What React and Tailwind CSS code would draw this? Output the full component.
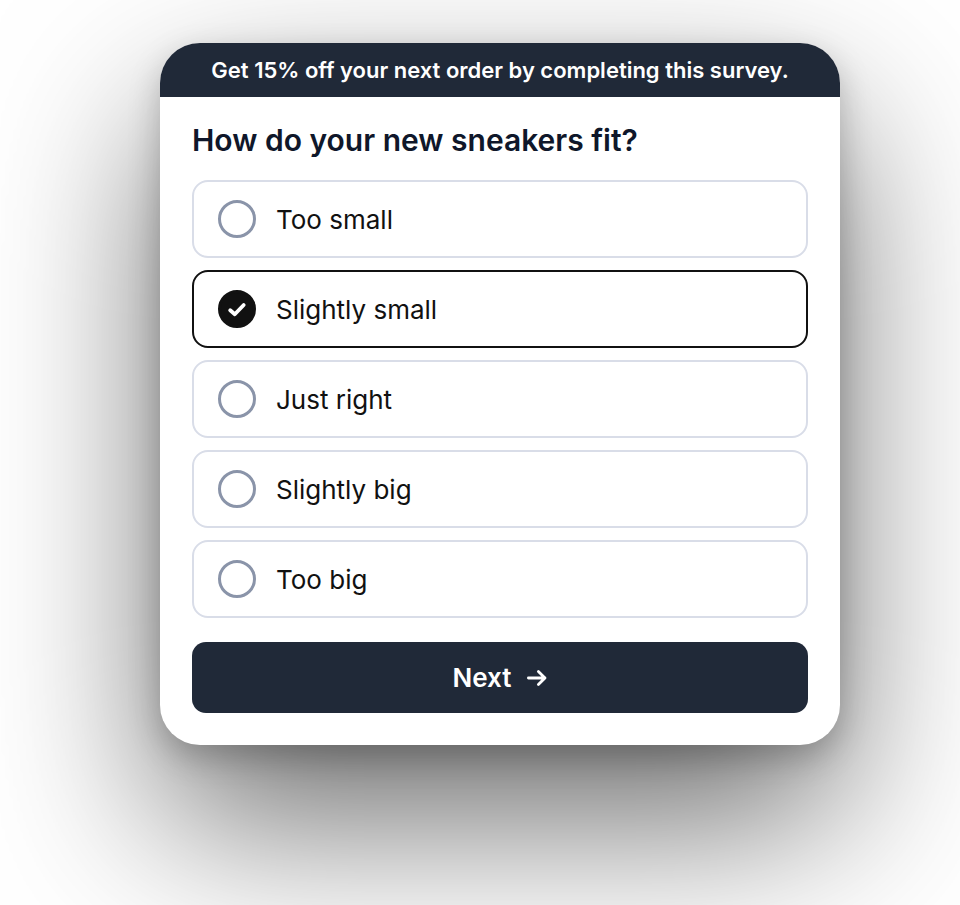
import React, { useState } from "react";

const OPTIONS = ["Too small", "Slightly small", "Just right", "Slightly big", "Too big"];

function Option({ label, checked, onSelect }) {
  return (
    <label
      className={[
        "flex cursor-pointer items-center gap-5 rounded-2xl border-2 px-6 py-[18px]",
        checked ? "border-[#111111]" : "border-[#d9dde8]",
      ].join(" ")}
    >
      <span className="grid shrink-0 place-items-center">
        <input
          type="radio"
          name="fit"
          value={label}
          checked={checked}
          onChange={() => onSelect(label)}
          className="col-start-1 row-start-1 size-[38px] appearance-none rounded-full border-3 border-[#8a94a9] checked:border-[#111111] checked:bg-[#111111]"
        />
        {checked && (
          <svg
            viewBox="0 0 38 38"
            className="pointer-events-none col-start-1 row-start-1 size-[38px]"
            fill="none"
            stroke="white"
            strokeWidth="3.8"
            strokeLinecap="round"
            strokeLinejoin="round"
            aria-hidden="true"
          >
            <path d="M12.2 20.2 L16.8 24.2 L25.7 15" />
          </svg>
        )}
      </span>
      <span className="pt-px text-[26px] leading-9 text-[#111111]">{label}</span>
    </label>
  );
}

export default function App() {
  const [answer, setAnswer] = useState("Slightly small");

  return (
    <main className="min-h-screen overflow-hidden bg-white pt-[43px] pr-4 pb-16 pl-14 font-['Inter',sans-serif]">
      <form
        onSubmit={(e) => e.preventDefault()}
        className="mx-auto max-w-[680px] rounded-[40px] bg-white shadow-[0_76px_170px_rgba(0,0,0,0.58),0_12px_32px_rgba(0,0,0,0.22)]"
      >
        <p className="rounded-t-[40px] bg-[#202938] px-8 py-[11px] text-center text-[22px] leading-8 font-semibold text-white">
          Get 15% off your next order by completing this survey.
        </p>

        <div className="px-8 pt-[23px] pb-8">
          <h1 id="question" className="text-[30px] leading-10 font-semibold text-[#0f172a]">
            How do your new sneakers fit?
          </h1>

          {/* Answers */}
          <div role="radiogroup" aria-labelledby="question" className="mt-5 flex flex-col gap-3">
            {OPTIONS.map((o) => (
              <Option key={o} label={o} checked={answer === o} onSelect={setAnswer} />
            ))}
          </div>

          <button
            type="submit"
            className="mt-6 flex h-[71px] w-full cursor-pointer items-center justify-center gap-4 rounded-[14px] bg-[#202938] text-[26px] leading-9 font-semibold text-white"
          >
            Next
            <svg
              viewBox="0 0 20 18"
              className="h-[18px] w-5"
              fill="none"
              stroke="currentColor"
              strokeWidth="2.8"
              strokeLinecap="round"
              strokeLinejoin="round"
              aria-hidden="true"
            >
              <path d="M1.4 9 H18 M11.4 2.4 L18 9 L11.4 15.6" />
            </svg>
          </button>
        </div>
      </form>
    </main>
  );
}
